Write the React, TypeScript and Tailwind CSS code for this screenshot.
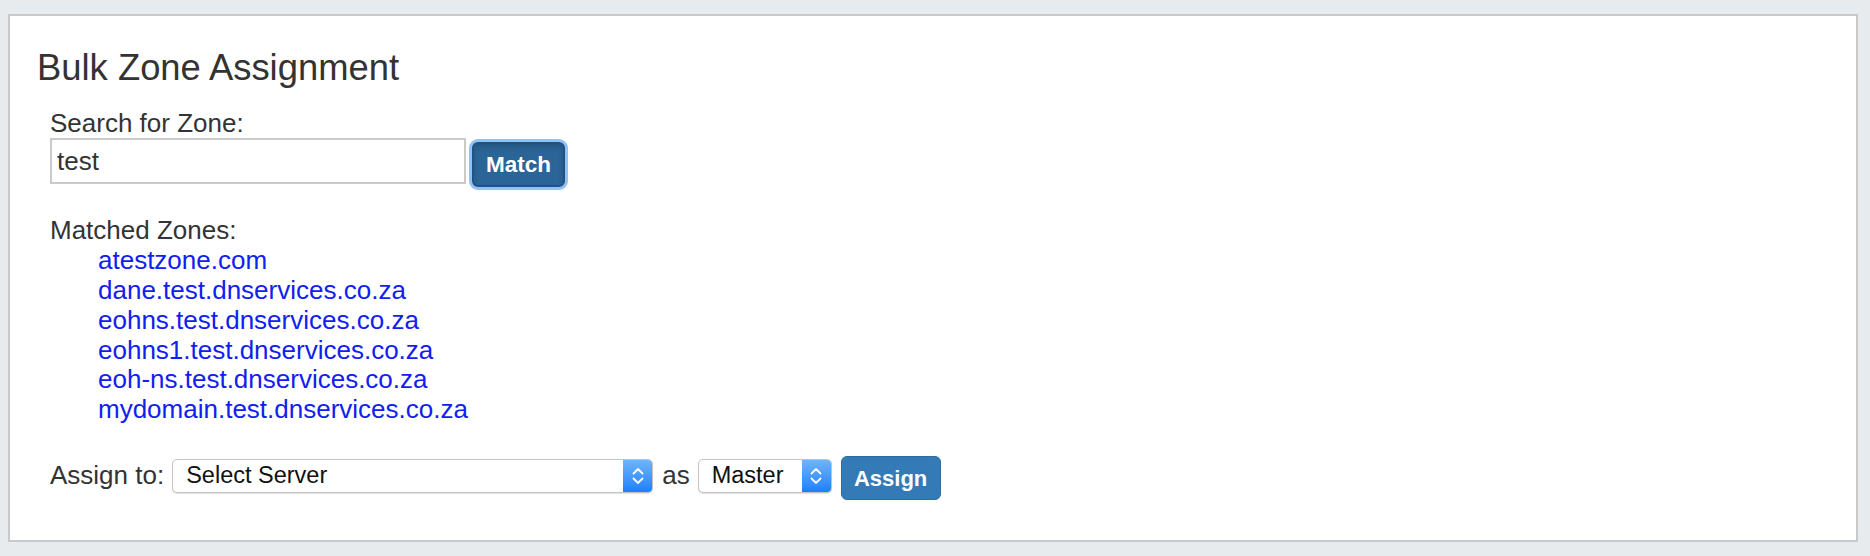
import React from "react";

const font = { fontFamily: '"Liberation Sans", Arial, Helvetica, sans-serif' };

function Chevrons() {
  return (
    <svg width="12" height="20" viewBox="0 0 12 20" fill="none">
      <polyline points="1.5,7.5 6,3 10.5,7.5" stroke="white" strokeWidth="1.8" strokeLinecap="round" strokeLinejoin="round" />
      <polyline points="1.5,12.5 6,17 10.5,12.5" stroke="white" strokeWidth="1.8" strokeLinecap="round" strokeLinejoin="round" />
    </svg>
  );
}

function FakeSelect({ label, width }: { label: string; width: string }) {
  return (
    <div
      className={`${width} h-[34px] mt-[3px] flex items-stretch rounded-[5px] border border-[#c4c4c4] bg-white shadow-[0_1px_1px_rgba(0,0,0,0.12)] overflow-hidden`}
    >
      <div className="flex-1 flex items-center pl-[13px] text-[23.5px] text-[#111] leading-none whitespace-nowrap">
        {label}
      </div>
      <div className="w-[29px] flex items-center justify-center bg-gradient-to-b from-[#6db4fb] to-[#1a7ffb]">
        <Chevrons />
      </div>
    </div>
  );
}

const zones = [
  "atestzone.com",
  "dane.test.dnservices.co.za",
  "eohns.test.dnservices.co.za",
  "eohns1.test.dnservices.co.za",
  "eoh-ns.test.dnservices.co.za",
  "mydomain.test.dnservices.co.za",
];

export default function App() {
  return (
    <div className="w-[1870px] h-[556px] bg-[#e8ebee] pt-[14px] pl-[8px]" style={font}>
      <div className="w-[1850px] h-[528px] bg-white border-2 border-[#c9c9c9] pt-[32px]">
        <h1 className="pl-[27px] text-[36.4px] leading-[40px] text-[#333] font-normal">Bulk Zone Assignment</h1>

        <div className="pl-[40px]">
          <div className="mt-[21px] text-[26px] leading-[29px] text-[#333]">Search for Zone:</div>
          <div className="flex items-start h-[46px]">
            <input
              readOnly
              value="test"
              className="w-[416px] h-[46px] border-2 border-[#cacaca] pl-[5px] text-[26px] text-[#333] outline-none bg-white"
              style={font}
            />
            <button
              className="ml-[6px] mt-[4px] w-[93px] h-[45px] rounded-[6px] border-2 border-[#215282] bg-[#2b6497] text-white text-[22.5px] font-bold shadow-[0_0_0_3px_#92c1f3,inset_0_3px_5px_rgba(0,0,0,0.15)]"
              style={font}
            >
              Match
            </button>
          </div>

          <div className="mt-[32px] text-[26px] leading-[1.15]">
            <div className="text-[#333]">Matched Zones:</div>
            {zones.map((z) => (
              <div key={z} className="pl-[48px]">
                <a href="#" className="text-[#1020f0]">{z}</a>
              </div>
            ))}
          </div>

          <div className="mt-[31px] flex items-start h-[44px]">
            <div className="mt-[4px] text-[26px] leading-[30px] text-[#333] whitespace-nowrap">Assign to:</div>
            <div className="ml-[8px]">
              <FakeSelect label="Select Server" width="w-[481px]" />
            </div>
            <div className="ml-[9px] mt-[4px] text-[26px] leading-[30px] text-[#333]">as</div>
            <div className="ml-[8px]">
              <FakeSelect label="Master" width="w-[134px]" />
            </div>
            <button
              className="ml-[9px] w-[100px] h-[44px] rounded-[6px] border border-[#2e6da4] bg-[#337ab7] text-white text-[22px] font-bold"
              style={font}
            >
              Assign
            </button>
          </div>
        </div>
      </div>
    </div>
  );
}
